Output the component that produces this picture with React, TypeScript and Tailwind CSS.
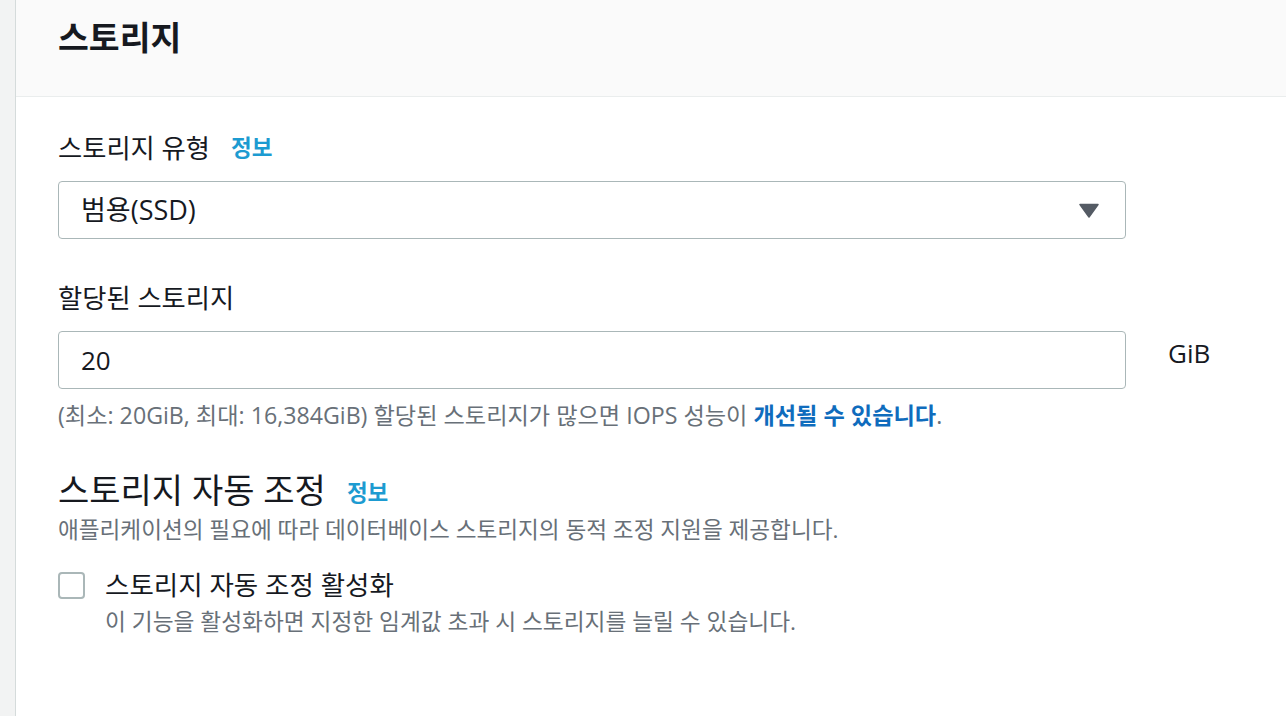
import React from 'react';

const FONT = { fontFamily: '"Open Sans", "Noto Sans CJK KR", sans-serif' };

function InfoLink({ className = '' }: { className?: string }) {
  return <span className={`text-[22.5px] font-bold text-[#1d9bd1] ${className}`}>정보</span>;
}

export default function App(): JSX.Element {
  return (
    <div className="flex w-full h-[716px] bg-white text-[#16191f] overflow-hidden" style={FONT}>
      <div className="w-[16px] shrink-0 bg-[#f2f3f3] border-r border-[#d5dbdb]" />

      <div className="flex-1 flex flex-col">
        {/* header */}
        <div className="h-[97px] bg-[#fafafa] border-b border-[#eaeded] px-[42px] pt-[17px]">
          <h2 className="text-[33.5px] leading-[40px] font-bold">스토리지</h2>
        </div>

        <div className="px-[42px]">
          {/* storage type */}
          <div className="mt-[35px] flex items-center h-[32px]">
            <span className="text-[26.3px] leading-[32px]">스토리지 유형</span>
            <InfoLink className="ml-[21px]" />
          </div>
          <div className="mt-[17px] w-[1068px] h-[58px] border border-[#aab7b8] rounded-[4px] flex items-center justify-between pl-[22px] pr-[26px]">
            <span className="text-[27px]">범용(SSD)</span>
            <svg width="20" height="15" viewBox="0 0 20 15">
              <path d="M1 1.5 H19 L10 14 Z" fill="#545b64" stroke="#545b64" strokeWidth="1.5" strokeLinejoin="round" />
            </svg>
          </div>

          {/* allocated storage */}
          <div className="mt-[43px] h-[32px] flex items-center">
            <span className="text-[26.3px] leading-[32px]">할당된 스토리지</span>
          </div>
          <div className="mt-[17px] flex items-center gap-[42px]">
            <div className="w-[1068px] h-[58px] border border-[#aab7b8] rounded-[4px] flex items-center pl-[22px]">
              <span className="text-[26px]">20</span>
            </div>
            <span className="text-[26px] -mt-[14px]">GiB</span>
          </div>
          <p className="mt-[12px] text-[23.2px] leading-[28px] text-[#687078] whitespace-nowrap">
            (최소: 20GiB, 최대: 16,384GiB) 할당된 스토리지가 많으면 IOPS 성능이{' '}
            <span className="font-bold text-[#0f6cbd]">개선될 수 있습니다</span>.
          </p>

          {/* autoscaling */}
          <div className="mt-[41px] flex items-center h-[40px]">
            <h3 className="text-[34px] leading-[40px]">스토리지 자동 조정</h3>
            <InfoLink className="ml-[21px] mt-[6px]" />
          </div>
          <p className="mt-[6px] text-[22.6px] leading-[28px] text-[#687078] whitespace-nowrap">
            애플리케이션의 필요에 따라 데이터베이스 스토리지의 동적 조정 지원을 제공합니다.
          </p>

          <div className="mt-[25px] flex items-start">
            <div className="mt-[3px] w-[27px] h-[27px] border-2 border-[#aab7b8] rounded-[4px] shrink-0" />
            <div className="ml-[20px]">
              <div className="text-[26.5px] leading-[32px]">스토리지 자동 조정 활성화</div>
              <div className="mt-[7px] text-[22.7px] leading-[28px] text-[#687078] whitespace-nowrap">
                이 기능을 활성화하면 지정한 임계값 초과 시 스토리지를 늘릴 수 있습니다.
              </div>
            </div>
          </div>
        </div>
      </div>
    </div>
  );
}
